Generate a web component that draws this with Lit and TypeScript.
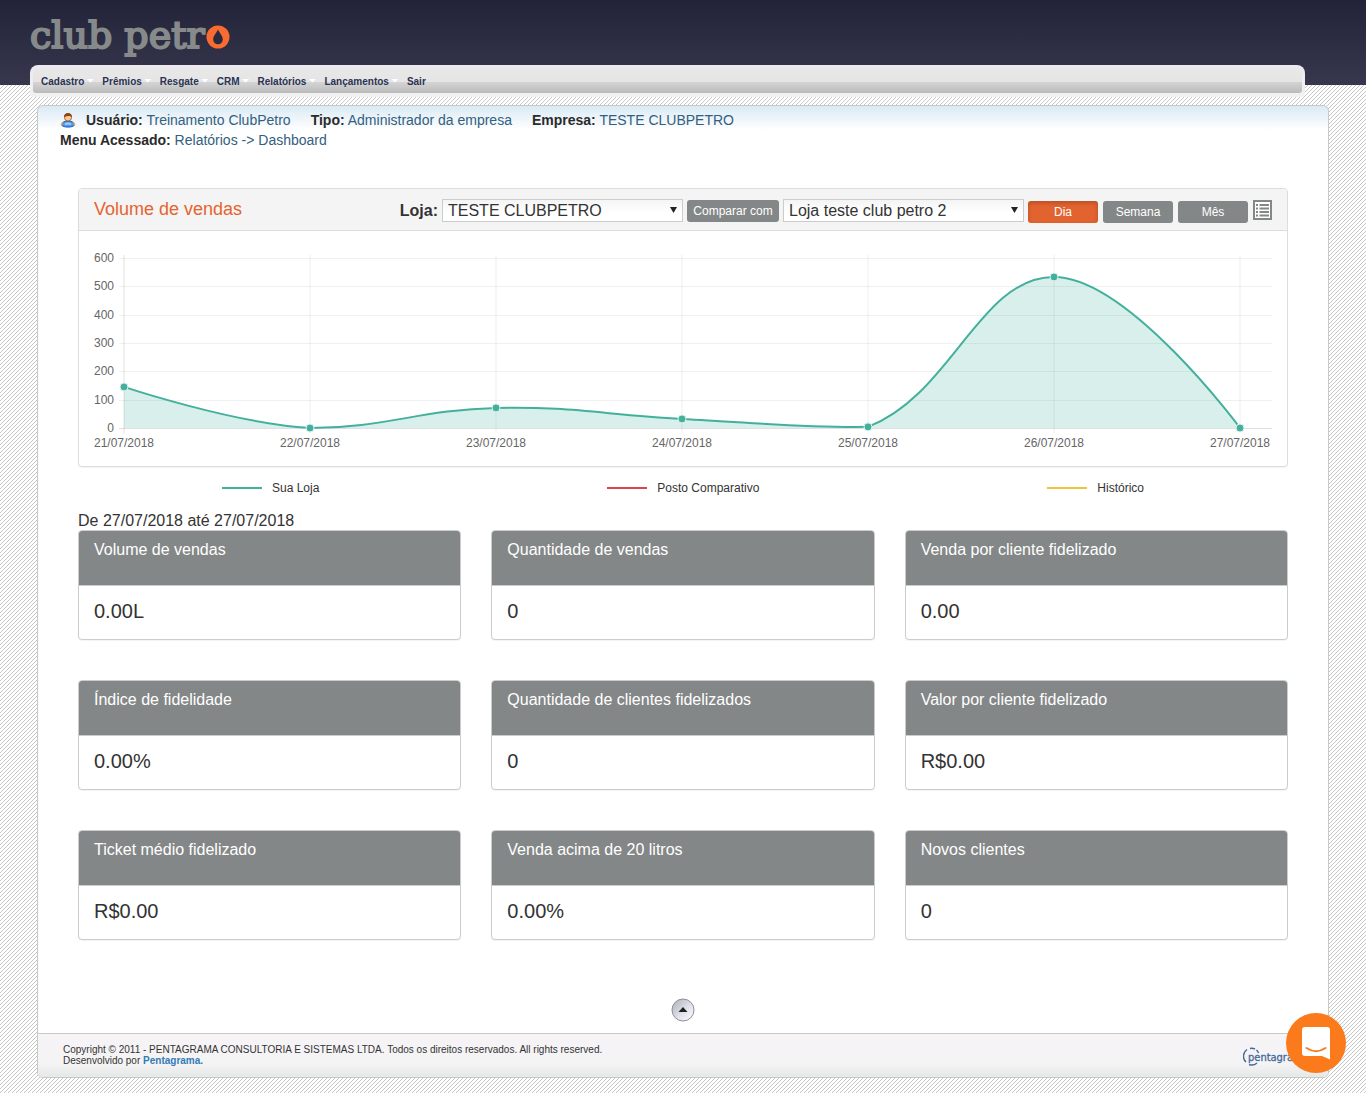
import { LitElement, html, svg, css } from "lit";
import { customElement } from "lit/decorators.js";

interface Card {
  title: string;
  value: string;
}

interface Point {
  x: number;
  y: number;
}

const MENU = [
  { label: "Cadastro", sub: true },
  { label: "Prêmios", sub: true },
  { label: "Resgate", sub: true },
  { label: "CRM", sub: true },
  { label: "Relatórios", sub: true },
  { label: "Lançamentos", sub: true },
  { label: "Sair", sub: false },
];

const CARDS: Card[] = [
  { title: "Volume de vendas", value: "0.00L" },
  { title: "Quantidade de vendas", value: "0" },
  { title: "Venda por cliente fidelizado", value: "0.00" },
  { title: "Índice de fidelidade", value: "0.00%" },
  { title: "Quantidade de clientes fidelizados", value: "0" },
  { title: "Valor por cliente fidelizado", value: "R$0.00" },
  { title: "Ticket médio fidelizado", value: "R$0.00" },
  { title: "Venda acima de 20 litros", value: "0.00%" },
  { title: "Novos clientes", value: "0" },
];

const SALES = [
  { day: "21/07/2018", value: 145 },
  { day: "22/07/2018", value: 0 },
  { day: "23/07/2018", value: 71 },
  { day: "24/07/2018", value: 32 },
  { day: "25/07/2018", value: 4 },
  { day: "26/07/2018", value: 533 },
  { day: "27/07/2018", value: 0 },
];

@customElement("sales-chart")
class SalesChart extends LitElement {
  static styles = css`
    :host {
      display: block;
    }
    .chart {
      display: block;
      width: 100%;
      height: auto;
    }
    .label {
      font: 12px "Liberation Sans", Arial, sans-serif;
      fill: #666;
    }
  `;

  // Smooths the line with a distance-weighted tension, clamped to the plot.
  // The first and last points have no tangent of their own.
  private curve(points: Point[], top: number, bottom: number): string {
    const tension = 0.4;
    const clamp = (y: number) => Math.min(bottom, Math.max(top, y));
    const controls = points.map((p, i) => {
      const prev = points[i - 1];
      const next = points[i + 1];
      if (!prev || !next) return { inX: p.x, inY: p.y, outX: p.x, outY: p.y };
      const before = Math.hypot(p.x - prev.x, p.y - prev.y);
      const after = Math.hypot(next.x - p.x, next.y - p.y);
      const a = (tension * before) / (before + after);
      const b = (tension * after) / (before + after);
      return {
        inX: p.x - a * (next.x - prev.x),
        inY: clamp(p.y - a * (next.y - prev.y)),
        outX: p.x + b * (next.x - prev.x),
        outY: clamp(p.y + b * (next.y - prev.y)),
      };
    });
    return points
      .map((p, i) => {
        if (i === 0) return `M${p.x} ${p.y}`;
        const from = controls[i - 1];
        const to = controls[i];
        return `C${from.outX} ${from.outY} ${to.inX} ${to.inY} ${p.x} ${p.y}`;
      })
      .join("");
  }

  render() {
    const left = 30;
    const top = 12;
    const bottom = 182;
    const step = 186;
    const points = SALES.map((s, i) => ({
      x: left + i * step,
      y: bottom - (s.value * (bottom - top)) / 600,
    }));
    const line = this.curve(points, top, bottom);
    const ticks = [0, 100, 200, 300, 400, 500, 600];
    return html`
      <svg class="chart" viewBox="0 0 1178 205" role="img" aria-label="Volume de vendas">
        ${ticks.map((t) => {
          const y = Math.round(bottom - (t * (bottom - top)) / 600) + 0.5;
          return svg`
            <line x1="25" x2="1178" y1=${y} y2=${y} stroke="#000"
              stroke-opacity=${t === 0 ? 0.12 : 0.06}></line>
            <text class="label" x="20" y=${y + 3.5} text-anchor="end">${t}</text>`;
        })}
        ${points.map(
          (p, i) => svg`
            <line x1=${p.x} x2=${p.x} y1="9" y2="187" stroke="#000" stroke-width="2"
              stroke-opacity=${i === 0 ? 0.06 : 0.03}></line>
            <text class="label" x=${p.x} y="201" text-anchor="middle">${SALES[i].day}</text>`
        )}
        <path d="${line}V${bottom}H${left}Z" fill="#43b09d" fill-opacity=".2"></path>
        <path d=${line} fill="none" stroke="#43b09d" stroke-width="2"></path>
        ${points.map(
          (p) => svg`<circle cx=${p.x} cy=${p.y} r="4" fill="#43b09d" stroke="#e3f3f0"></circle>`
        )}
      </svg>
    `;
  }
}

@customElement("metric-card")
class MetricCard extends LitElement {
  static properties = { heading: {}, value: {} };
  declare heading: string;
  declare value: string;

  static styles = css`
    :host {
      display: block;
      border: 1px solid #ccc;
      border-radius: 4px;
      background: #fff;
      box-shadow: 0 1px 1px rgba(0, 0, 0, 0.05);
      overflow: hidden;
    }
    .heading {
      margin: 0;
      padding: 11px 15px 27px;
      background: #848787;
      border-bottom: 1px solid #ccc;
      color: #fff;
      font-size: 16px;
      line-height: 16px;
      font-weight: 400;
    }
    .value {
      margin: 0;
      padding: 15px 15px 18px;
      font-size: 20px;
      line-height: 20px;
    }
  `;

  render() {
    return html`<h3 class="heading">${this.heading}</h3>
      <p class="value">${this.value}</p>`;
  }
}

@customElement("app-root")
class AppRoot extends LitElement {
  static styles = css`
    :host {
      display: block;
      min-height: 100vh;
      color: #333;
      font-family: "Liberation Sans", Arial, sans-serif;
      background: linear-gradient(135deg, #fff 45%, #c6c6c6 45%, #c6c6c6 55%, #fff 55%) 0 1px / 4px 4px;
    }
    * {
      box-sizing: border-box;
    }
    a {
      color: inherit;
      text-decoration: none;
    }
    .top {
      height: 85px;
      padding: 0 61px 0 30px;
      background: linear-gradient(#222238, #37384e);
    }
    .brand {
      display: flex;
      align-items: center;
      gap: 1px;
      width: max-content;
      height: 65px;
      padding-top: 5px;
      color: #868a8a;
      font-family: "DejaVu Serif", serif;
      font-size: 38px;
      line-height: 60px;
      -webkit-text-stroke: 2px #868a8a;
    }
    .drop {
      width: 24px;
      height: 24px;
      margin-top: 4px;
    }
    .menu {
      display: flex;
      height: 32px;
      padding: 3px;
      border-radius: 8px 8px 4px 4px;
      background: linear-gradient(#ebe8ee, #f2f2f2);
    }
    .menu-list {
      display: flex;
      flex: 1;
      height: 25px;
      margin: 0;
      padding: 0 8px;
      list-style: none;
      gap: 5px;
      border-radius: 5px 5px 3px 3px;
      background: linear-gradient(#e9e8e9, #e6e5e6 14px, #d5d5d5 14px, #bababa);
    }
    .menu-link {
      display: flex;
      align-items: center;
      height: 27px;
      gap: 2px;
      color: #2a3352;
      font-size: 10px;
      font-weight: 700;
    }
    .caret {
      width: 8px;
      height: 4px;
      margin-bottom: 2px;
      margin-right: 3px;
      background: #fff;
      clip-path: polygon(0 0, 100% 0, 50% 100%);
    }
    .page {
      margin: 20px 37px 0;
      border: 1px solid #c3cbc3;
      border-radius: 6px;
      overflow: hidden;
      background: linear-gradient(#dbeaf5, #fff 24px);
    }
    .session {
      padding: 4px 22px 0;
      color: #326080;
      font-size: 14px;
      line-height: 20px;
    }
    .session-row {
      display: flex;
      gap: 20px;
    }
    .session b {
      color: #2b2b2b;
    }
    .user {
      display: flex;
      align-items: center;
      gap: 10px;
    }
    .content {
      padding: 38px 40px 0;
    }
    .panel {
      border: 1px solid #ddd;
      border-radius: 4px;
      box-shadow: 0 1px 1px rgba(0, 0, 0, 0.05);
      background: #fff;
    }
    .panel-head {
      display: flex;
      align-items: center;
      height: 42px;
      padding: 2px 15px 0;
      gap: 4px;
      border-bottom: 1px solid #ddd;
      border-radius: 3px 3px 0 0;
      background: #f4f4f4;
    }
    .panel-title {
      flex: 1;
      margin: 0;
      padding-bottom: 4px;
      color: #e6632f;
      font-size: 18px;
      font-weight: 400;
      line-height: 20px;
    }
    .store-label {
      font-size: 16px;
      font-weight: 700;
    }
    .select {
      position: relative;
      display: flex;
    }
    .select::after {
      content: "";
      position: absolute;
      right: 6px;
      top: 8px;
      width: 7px;
      height: 6px;
      background: #222;
      clip-path: polygon(0 0, 100% 0, 50% 100%);
      pointer-events: none;
    }
    .store {
      appearance: none;
      width: 241px;
      height: 23px;
      padding: 0 5px;
      border: 1px solid #ccc;
      border-radius: 0;
      background: linear-gradient(#f4f4f4, #fff 12px);
      color: #333;
      font: 16px/20px "Liberation Sans", Arial, sans-serif;
    }
    .btn {
      height: 22px;
      padding: 0;
      border: 0;
      border-radius: 3px;
      background: #848787;
      color: #fff;
      font: 12px/22px "Liberation Sans", Arial, sans-serif;
    }
    .compare {
      width: 92px;
    }
    .periods {
      display: flex;
      align-items: center;
      gap: 5px;
      padding-top: 2px;
    }
    .period {
      width: 70px;
    }
    .active {
      background: #e2632f;
      box-shadow: inset 0 2px 4px rgba(0, 0, 0, 0.2);
    }
    .list {
      display: flex;
      height: 23px;
      padding: 0;
      border: 0;
      background: none;
    }
    .panel-body {
      padding: 15px;
    }
    .legend {
      display: flex;
      justify-content: space-around;
      margin: 0;
      padding: 11px 0 12px;
      list-style: none;
      font-size: 12px;
      line-height: 20px;
    }
    .legend-item {
      display: flex;
      align-items: center;
      gap: 10px;
    }
    .swatch {
      width: 40px;
      height: 2px;
      background: #43b09d;
    }
    .swatch.rival {
      background: #d9434a;
    }
    .swatch.history {
      background: #f1c43f;
    }
    .range {
      margin: 0;
      padding-top: 2px;
      font-size: 16px;
      line-height: 18px;
    }
    .cards {
      display: grid;
      grid-template-columns: repeat(3, 1fr);
      gap: 40px 30px;
    }
    .to-top {
      display: block;
      width: 24px;
      height: 24px;
      margin: 58px auto 11px;
    }
    .foot {
      display: flex;
      align-items: flex-start;
      justify-content: space-between;
      height: 44px;
      padding: 10px 0 0 25px;
      border-top: 1px solid #c3cbc3;
      background: linear-gradient(#f7f3f7, #f4f4f4 30px, #e6e7e8);
      font-size: 10px;
      line-height: 11px;
    }
    .foot-text {
      margin: 0;
    }
    .foot-link {
      color: #337ab7;
      font-weight: 700;
    }
    .maker {
      width: 85px;
      height: 26px;
    }
    .maker-name {
      font: 11px "DejaVu Sans Condensed", "Liberation Sans", sans-serif;
      fill: #44699b;
      stroke: #44699b;
      stroke-width: 0.3px;
    }
    .chat {
      position: fixed;
      right: 20px;
      bottom: 20px;
      width: 60px;
      height: 60px;
      padding: 0;
      border: 0;
      border-radius: 50%;
      background: #fb7a1b;
    }
  `;

  render() {
    return html`
      <header class="top">
        <a class="brand" href="#" aria-label="club petro">
          <span>club petr</span>
          <svg class="drop" viewBox="0 0 24 24" aria-hidden="true">
            <circle cx="12" cy="12" r="11.5" fill="#f96b30"></circle>
            <path d="M12 4.5C14 8.500 16.800 11.200 16.800 14.500A4.800 4.800 0 0 1 7.200 14.500C7.200 11.200 10 8.500 12 4.500Z" fill="#29293f"></path>
          </svg>
        </a>
        <nav class="menu">
          <ul class="menu-list">
            ${MENU.map(
              (m) => html`<li>
                <a class="menu-link" href="#">${m.label}${m.sub ? html`<span class="caret"></span>` : ""}</a>
              </li>`
            )}
          </ul>
        </nav>
      </header>

      <main class="page">
        <div class="session">
          <div class="session-row">
            <span class="user">
              <svg width="16" height="16" viewBox="0 0 16 16" aria-hidden="true">
                <path d="M1.500 13C2 10 4.500 9 8 9S14 10 14.500 13C13 15.800 3 15.800 1.500 13Z" fill="#4a96f0" stroke="#1c5cc0"></path>
                <path d="M1.500 13.500C1.300 12 2 11 3 10.500M14.500 13.500C14.700 12 14 11 13 10.500" fill="none" stroke="#e39a5c" stroke-width="1.500"></path>
                <path d="M5 12.500C6.500 11 9.500 11 11 12.500" fill="none" stroke="#9ccdff" stroke-width="2"></path>
                <circle cx="8" cy="5.500" r="3.500" fill="#fbc890" stroke="#b06a34"></circle>
                <path d="M4 5.500C3.700 2.500 5.500 1 8 1S12.300 2.500 12 5.500C11 4 9 3.800 7 4.200 5.500 4.300 4.700 4.700 4 5.500Z" fill="#8a4318"></path>
              </svg>
              <span><b>Usuário:</b> Treinamento ClubPetro</span>
            </span>
            <span><b>Tipo:</b> Administrador da empresa</span>
            <span><b>Empresa:</b> TESTE CLUBPETRO</span>
          </div>
          <div><b>Menu Acessado:</b> Relatórios -&gt; Dashboard</div>
        </div>

        <div class="content">
          <section class="panel">
            <div class="panel-head">
              <h2 class="panel-title">Volume de vendas</h2>
              <label class="store-label" for="store">Loja:</label>
              <span class="select">
                <select class="store" id="store">
                  <option>TESTE CLUBPETRO</option>
                </select>
              </span>
              <button class="btn compare" type="button">Comparar com</button>
              <span class="select">
                <select class="store" aria-label="Comparar com">
                  <option>Loja teste club petro 2</option>
                </select>
              </span>
              <div class="periods">
                <button class="btn period active" type="button">Dia</button>
                <button class="btn period" type="button">Semana</button>
                <button class="btn period" type="button">Mês</button>
                <button class="list" type="button" aria-label="Lista">
                  <svg width="19" height="20" viewBox="0 0 19 20" aria-hidden="true">
                    <rect x="1" y="1" width="17" height="18" fill="#fff" stroke="#848787" stroke-width="2"></rect>
                    <path d="M3 5h2M3 8.500h2M3 12h2M3 15.500h2M6.500 5H16M6.500 8.500H16M6.500 12H16M6.500 15.500H16" stroke="#848787" stroke-width="2"></path>
                  </svg>
                </button>
              </div>
            </div>
            <div class="panel-body"><sales-chart></sales-chart></div>
          </section>

          <ul class="legend">
            <li class="legend-item"><span class="swatch"></span>Sua Loja</li>
            <li class="legend-item"><span class="swatch rival"></span>Posto Comparativo</li>
            <li class="legend-item"><span class="swatch history"></span>Histórico</li>
          </ul>

          <p class="range">De 27/07/2018 até 27/07/2018</p>
          <div class="cards">
            ${CARDS.map((c) => html`<metric-card .heading=${c.title} .value=${c.value}></metric-card>`)}
          </div>

          <a class="to-top" href="#" aria-label="Voltar ao topo">
            <svg width="24" height="24" viewBox="0 0 24 24" aria-hidden="true">
              <defs>
                <linearGradient id="metal" x1="0" y1="0" x2="1" y2="1">
                  <stop offset="0" stop-color="#a9adb8"></stop>
                  <stop offset=".55" stop-color="#dfe2ea"></stop>
                  <stop offset="1" stop-color="#ffffff"></stop>
                </linearGradient>
              </defs>
              <circle cx="12" cy="12" r="11" fill="url(#metal)" stroke="#8f8f96"></circle>
              <path d="M7.500 14L12 9L16.500 14Z" fill="#222"></path>
            </svg>
          </a>
        </div>

        <footer class="foot">
          <p class="foot-text">
            Copyright © 2011 - PENTAGRAMA CONSULTORIA E SISTEMAS LTDA. Todos os direitos reservados. All
            rights reserved.<br />Desenvolvido por <a class="foot-link" href="#">Pentagrama.</a>
          </p>
          <svg class="maker" viewBox="0 0 85 26" role="img" aria-label="Pentagrama">
            <path d="M4 5.500A8 8 0 0 0 3 18M6 20.500A8 8 0 0 0 14 19M7 4.500A8 8 0 0 1 12 5M13.500 6A8 8 0 0 1 15.500 9" fill="none" stroke="#44699b" stroke-width="1.400"></path>
            <text class="maker-name" x="5" y="17">pentagrama</text>
          </svg>
        </footer>
      </main>

      <button class="chat" type="button" aria-label="Abrir chat">
        <svg width="60" height="60" viewBox="0 0 60 60" aria-hidden="true">
          <path d="M19 14H41Q44 14 44 17V46.500L36 43H19Q16 43 16 40V17Q16 14 19 14Z" fill="#fff"></path>
          <path d="M20.500 35Q30 41.500 39.500 35" fill="none" stroke="#fb7a1b" stroke-width="2" stroke-linecap="round"></path>
        </svg>
      </button>
    `;
  }
}
